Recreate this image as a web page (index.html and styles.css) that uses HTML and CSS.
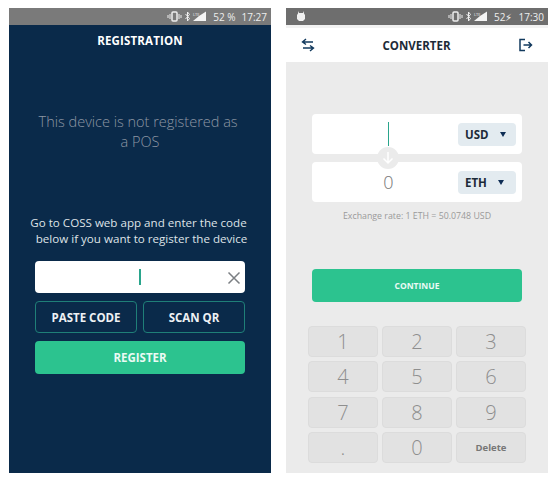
FILE: index.html
```html
<!DOCTYPE html>
<html lang="en">
<head>
    <meta charset="UTF-8">
    <title>COSS POS</title>
    <link rel="stylesheet" href="styles.css">
</head>
<body>
    <div class="phones">
        <div class="phone phone-dark">
            <div class="status">
                <span class="status-left"></span>
                <svg class="status-icons" width="40" height="13" viewBox="0 0 40 13">
                    <path d="M1 5v3M3 4v5M12 4v5M14 5v3" stroke="#eee" stroke-width="1" fill="none"/>
                    <rect x="5" y="2" width="5" height="9" rx="1" fill="none" stroke="#eee" stroke-width="1.500"/>
                    <path d="M18.500 4l4 4.500-2 2.500V2l2 2.500-4 4.500" stroke="#eee" stroke-width="1" fill="none"/>
                    <path d="M39 1.500V11H26l6-5z" fill="#f4f4f4"/>
                    <text x="26" y="5.500" class="lte">LTE</text>
                </svg>
                <span class="status-text">52 %</span>
                <span class="status-text">17:27</span>
            </div>
            <div class="reg-title">REGISTRATION</div>
            <p class="reg-notice">This device is not registered as&nbsp;<br>a POS</p>
            <p class="reg-help">Go to COSS web app and enter the code&nbsp;<br>&nbsp;below if you want to register the device</p>
            <div class="reg-form">
                <div class="code-input">
                    <span class="caret"></span>
                    <svg class="clear" width="14" height="14" viewBox="0 0 14 14">
                        <path d="M1.500 1.500l11 11M12.500 1.500l-11 11" stroke="#7b7f83" stroke-width="1.500" fill="none"/>
                    </svg>
                </div>
                <div class="reg-actions">
                    <button class="btn-outline">PASTE CODE</button>
                    <button class="btn-outline">SCAN QR</button>
                </div>
                <button class="btn-green btn-register">REGISTER</button>
            </div>
        </div>

        <div class="phone phone-light">
            <div class="status status-light">
                <svg class="status-left" width="10" height="11" viewBox="0 0 10 11">
                    <path d="M2 0l1 2h4l1-2v2.500l1 1.500v4l-2 2h-4l-2-2v-4l1-1.500z" fill="#f0f0f0"/>
                </svg>
                <svg class="status-icons" width="40" height="13" viewBox="0 0 40 13">
                    <path d="M1 5v3M3 4v5M12 4v5M14 5v3" stroke="#eee" stroke-width="1" fill="none"/>
                    <rect x="5" y="2" width="5" height="9" rx="1" fill="none" stroke="#eee" stroke-width="1.500"/>
                    <path d="M18.500 4l4 4.500-2 2.500V2l2 2.500-4 4.500" stroke="#eee" stroke-width="1" fill="none"/>
                    <path d="M39 1.500V11H26l6-5z" fill="#f4f4f4"/>
                    <text x="26" y="5.500" class="lte">LTE</text>
                </svg>
                <span class="status-text">52&#9889;&#xFE0E;</span>
                <span class="status-text">17:30</span>
            </div>
            <div class="conv-header">
                <svg width="14" height="14" viewBox="0 0 14 14">
                    <path d="M5 1L1.500 4 5 6.500M2 4h10M9 7.500L12.500 10 9 13M12 10H2" stroke="#123a5e" stroke-width="1.400" fill="none"/>
                </svg>
                <span class="conv-title">CONVERTER</span>
                <svg width="15" height="14" viewBox="0 0 15 14">
                    <path d="M7 1.500H2v11h5M5.500 7h8M10.500 4l3 3-3 3" stroke="#123a5e" stroke-width="1.500" fill="none"/>
                </svg>
            </div>
            <div class="conv-body">
                <div class="conv-cards">
                    <div class="conv-card">
                        <span class="conv-value"><span class="caret caret-tall"></span></span>
                        <span class="currency">USD <i class="arrow"></i></span>
                    </div>
                    <div class="conv-card">
                        <span class="conv-value">0</span>
                        <span class="currency">ETH <i class="arrow"></i></span>
                    </div>
                    <span class="swap">
                        <svg width="14" height="14" viewBox="0 0 14 14">
                            <path d="M7 1v11M2.500 7.500L7 12l4.500-4.500" stroke="#fff" stroke-width="1.500" fill="none"/>
                        </svg>
                    </span>
                </div>
                <p class="rate">Exchange rate: 1 ETH = 50.0748 USD</p>
                <button class="btn-green btn-continue">CONTINUE</button>
                <div class="keypad">
                    <button class="key">1</button>
                    <button class="key">2</button>
                    <button class="key">3</button>
                    <button class="key">4</button>
                    <button class="key">5</button>
                    <button class="key">6</button>
                    <button class="key">7</button>
                    <button class="key">8</button>
                    <button class="key">9</button>
                    <button class="key">.</button>
                    <button class="key">0</button>
                    <button class="key key-delete">Delete</button>
                </div>
            </div>
        </div>
    </div>
</body>
</html>
```

FILE: styles.css
```css
body {
    font-family: "Open Sans", sans-serif;
    background-color: #fff;
    margin: 0;
    padding: 8px 9px;
}
button {
    font-family: "Open Sans", sans-serif;
    cursor: pointer;
}
.phones {
    display: flex;
    gap: 15px;
}
.phone {
    width: 262px;
    height: 465px;
    display: flex;
    flex-direction: column;
}
.phone-dark {
    background: #0a2a4a;
    color: #fff;
}
.phone-light {
    background: #ebebeb;
}

/* status bar */
.status {
    height: 17px;
    flex: none;
    background: #7a7a7a;
    display: flex;
    align-items: center;
    justify-content: flex-end;
    gap: 6px;
    padding: 0 4px 0 10px;
    color: #eee;
    font-size: 10px;
}
.status-light {
    background: #6e6e6e;
}
.status-left {
    margin-right: auto;
}
.lte {
    font-size: 4px;
    fill: #eee;
}

/* registration */
.reg-title {
    font-size: 11.500px;
    font-weight: 700;
    text-align: center;
    letter-spacing: 0.150px;
    margin-top: 8px;
    line-height: 16px;
}
.reg-notice {
    margin: 63px 0 0;
    text-align: center;
    font-size: 14.500px;
    font-weight: 300;
    line-height: 20px;
    color: #8e97a4;
}
.reg-help {
    margin: 63px 0 0;
    text-align: center;
    font-size: 11.600px;
    line-height: 16px;
    color: #dfe3e7;
}
.reg-form {
    margin: 14px 26px 0;
    display: flex;
    flex-direction: column;
    gap: 8px;
}
.code-input {
    height: 32px;
    background: #fff;
    border-radius: 4px;
    display: flex;
    align-items: center;
    justify-content: center;
    position: relative;
}
.caret {
    display: block;
    width: 1.500px;
    height: 16px;
    background: #2aa58c;
}
.clear {
    position: absolute;
    right: 4px;
    top: 10px;
}
.reg-actions {
    display: flex;
    gap: 6px;
}
.btn-outline {
    flex: 1;
    height: 32px;
    background: transparent;
    border: 1px solid #1f7f78;
    border-radius: 4px;
    color: #eef1f4;
    font-size: 11.500px;
    font-weight: 700;
    padding: 0;
}
.btn-green {
    background: #2cc38f;
    border: none;
    border-radius: 4px;
    color: #eafaf4;
    font-weight: 700;
    padding: 0;
}
.btn-register {
    height: 33px;
    font-size: 11.500px;
}

/* converter */
.conv-header {
    flex: none;
    height: 34px;
    margin-top: 3px;
    background: #fff;
    display: flex;
    align-items: center;
    justify-content: space-between;
    padding: 0 15px;
    box-shadow: 0 -3px 0 #f2f2f2;
}
.conv-title {
    font-size: 11.500px;
    font-weight: 700;
    color: #1d2b38;
}
.conv-body {
    flex: 1;
    position: relative;
    display: flex;
    flex-direction: column;
    align-items: center;
}
.conv-cards {
    position: relative;
    margin-top: 52px;
    display: flex;
    flex-direction: column;
    gap: 8px;
}
.conv-card {
    width: 210px;
    height: 40px;
    box-sizing: border-box;
    background: #fff;
    border-radius: 4px;
    display: flex;
    align-items: center;
    padding-right: 6px;
}
.conv-value {
    flex: 1;
    display: flex;
    justify-content: center;
    padding-left: 7px;
    font-size: 18px;
    font-weight: 300;
    color: #777;
}
.caret-tall {
    height: 24px;
}
.currency {
    width: 58px;
    height: 23px;
    box-sizing: border-box;
    padding-left: 7px;
    background: #e3ebf0;
    border-radius: 4px;
    font-size: 11.500px;
    font-weight: 700;
    color: #1d2b38;
    display: flex;
    align-items: center;
    gap: 11px;
}
.arrow {
    width: 0;
    height: 0;
    border-left: 3px solid transparent;
    border-right: 3px solid transparent;
    border-top: 5px solid #0e2d55;
}
.swap {
    position: absolute;
    left: 65px;
    top: 33px;
    width: 22px;
    height: 22px;
    border-radius: 50%;
    background: #ebebeb;
    display: flex;
    align-items: center;
    justify-content: center;
}
.rate {
    margin: 8px 0 0;
    font-size: 8.800px;
    line-height: 12px;
    color: #9a9a9a;
}
.btn-continue {
    width: 210px;
    height: 33px;
    margin-top: 47px;
    font-size: 8.500px;
}
.keypad {
    margin-top: 24px;
    display: grid;
    grid-template-columns: repeat(3, 70px);
    grid-auto-rows: 31px;
    gap: 4.300px 4px;
}
.key {
    background: #e2e2e2;
    border: 1px solid #dcdcdc;
    border-radius: 4px;
    font-size: 20px;
    font-weight: 300;
    color: #8e8e8e;
    padding: 0;
}
.key-delete {
    font-size: 9.500px;
    font-weight: 700;
    color: #777;
}
```
